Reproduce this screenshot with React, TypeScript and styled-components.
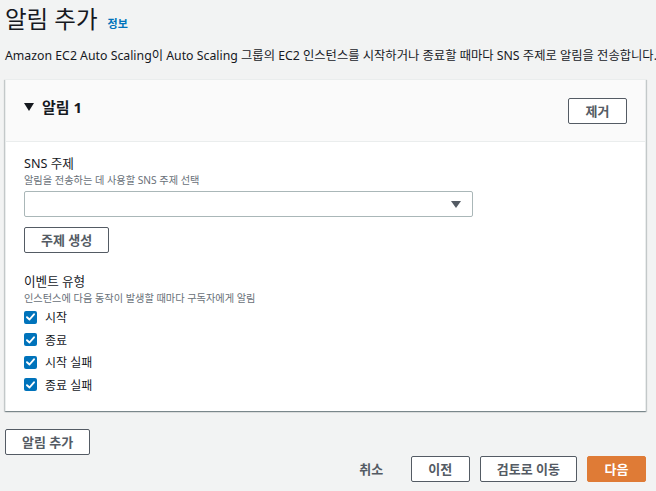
import React from "react";
import styled, { createGlobalStyle } from "styled-components";

const Global = createGlobalStyle`
  html, body { margin: 0; padding: 0; background: #f2f3f3; }
  body {
    font-family: "Noto Sans", "Noto Sans CJK KR", sans-serif;
    color: #16191f;
    -webkit-font-smoothing: antialiased;
  }
  * { box-sizing: border-box; }
`;

const Page = styled.div`
  width: 656px;
  height: 491px;
  padding: 1px 10px 0 5px;
  display: flex;
  flex-direction: column;
  overflow: hidden;
`;

const TitleRow = styled.div`
  display: flex;
  align-items: baseline;
  gap: 10px;
  height: 36px;
`;

const Title = styled.h1`
  margin: 0;
  font-size: 23.5px;
  font-weight: 400;
  line-height: 36px;
  color: #16191f;
`;

const InfoLink = styled.a`
  font-size: 11px;
  font-weight: 700;
  color: #0073bb;
  text-decoration: none;
`;

const Description = styled.p`
  margin: 8px 0 0;
  font-size: 12.3px;
  line-height: 22px;
  color: #16191f;
  white-space: nowrap;
`;

const Card = styled.section`
  margin-top: 12px;
  background: #fff;
  border: 1px solid #eaeded;
  border-bottom: none;
  box-shadow: 0 1px 1px 0 rgba(0, 28, 36, 0.3), 1px 1px 1px 0 rgba(0, 28, 36, 0.15),
    -1px 1px 1px 0 rgba(0, 28, 36, 0.15);
`;

const CardHeader = styled.header`
  height: 62px;
  background: #fafafa;
  border-bottom: 1px solid #eaeded;
  display: flex;
  justify-content: space-between;
  align-items: flex-start;
  padding: 0 18px 0 18px;
`;

const CardTitle = styled.h2`
  margin: 16px 0 0;
  display: flex;
  align-items: center;
  gap: 8px;
  font-size: 15px;
  font-weight: 700;
  line-height: 22px;
`;

const CardBody = styled.div`
  padding: 13px 18px 15px 18px;
  display: flex;
  flex-direction: column;
`;

const Field = styled.div<{ $gap?: number }>`
  display: flex;
  flex-direction: column;
  align-items: flex-start;
  margin-top: ${(p) => p.$gap ?? 0}px;
`;

const Label = styled.div`
  font-size: 12.6px;
  line-height: 18px;
  color: #16191f;
`;

const Hint = styled.div`
  font-size: 10.2px;
  line-height: 14px;
  color: #687078;
`;

const Select = styled.div`
  margin-top: 4px;
  width: 449px;
  height: 26px;
  border: 1px solid #aab7b8;
  border-radius: 2px;
  background: #fff;
  display: flex;
  align-items: center;
  justify-content: flex-end;
  padding-right: 11px;
`;

const Button = styled.button<{ $primary?: boolean; $plain?: boolean; $mt?: number }>`
  height: 26px;
  padding: 0 16px;
  min-width: 59px;
  margin-top: ${(p) => p.$mt ?? 0}px;
  border-radius: 2px;
  font-family: inherit;
  font-size: 13px;
  font-weight: 700;
  line-height: 1;
  cursor: pointer;
  white-space: nowrap;
  border: 1px solid ${(p) => (p.$primary ? "#df7b36" : p.$plain ? "transparent" : "#545b64")};
  background: ${(p) => (p.$primary ? "#df7b36" : p.$plain ? "transparent" : "#fff")};
  color: ${(p) => (p.$primary ? "#fff" : "#545b64")};
`;

const CheckList = styled.div`
  margin-top: 1px;
  display: grid;
  grid-auto-rows: 22.5px;
`;

const CheckRow = styled.label`
  display: flex;
  align-items: center;
  gap: 8px;
  font-size: 12px;
  color: #16191f;
`;

const Box = styled.span`
  width: 13px;
  height: 13px;
  border-radius: 2px;
  background: #0073bb;
  display: inline-flex;
  align-items: center;
  justify-content: center;
`;

const Bottom = styled.div`
  margin-top: 18px;
  display: flex;
  flex-direction: column;
  align-items: flex-start;
`;

const Footer = styled.div`
  margin-top: 1px;
  align-self: stretch;
  display: flex;
  justify-content: flex-end;
  gap: 10px;
`;

const Check = () => (
  <Box>
    <svg width="9" height="8" viewBox="0 0 9 8">
      <path d="M1 4.2 L3.5 6.5 L8 1.3" fill="none" stroke="#fff" strokeWidth="1.9" strokeLinecap="round" strokeLinejoin="round" />
    </svg>
  </Box>
);

const events = ["시작", "종료", "시작 실패", "종료 실패"];

export default function App() {
  return (
    <>
      <Global />
      <Page>
        <TitleRow>
          <Title>알림 추가</Title>
          <InfoLink href="#">정보</InfoLink>
        </TitleRow>
        <Description>
          Amazon EC2 Auto Scaling이 Auto Scaling 그룹의 EC2 인스턴스를 시작하거나 종료할 때마다 SNS 주제로 알림을 전송합니다.
        </Description>
        <Card>
          <CardHeader>
            <CardTitle>
              <svg width="10" height="8" viewBox="0 0 10 8">
                <path d="M0 0 H10 L5 8 Z" fill="#16191f" />
              </svg>
              알림 1
            </CardTitle>
            <Button $mt={18}>제거</Button>
          </CardHeader>
          <CardBody>
            <Field>
              <Label>SNS 주제</Label>
              <Hint>알림을 전송하는 데 사용할 SNS 주제 선택</Hint>
              <Select>
                <svg width="10" height="7" viewBox="0 0 10 7">
                  <path d="M0 0 H10 L5 7 Z" fill="#545b64" />
                </svg>
              </Select>
              <Button $mt={10}>주제 생성</Button>
            </Field>
            <Field $gap={20}>
              <Label>이벤트 유형</Label>
              <Hint>인스턴스에 다음 동작이 발생할 때마다 구독자에게 알림</Hint>
              <CheckList>
                {events.map((e) => (
                  <CheckRow key={e}>
                    <Check />
                    {e}
                  </CheckRow>
                ))}
              </CheckList>
            </Field>
          </CardBody>
        </Card>
        <Bottom>
          <Button>알림 추가</Button>
          <Footer>
            <Button $plain>취소</Button>
            <Button>이전</Button>
            <Button>검토로 이동</Button>
            <Button $primary>다음</Button>
          </Footer>
        </Bottom>
      </Page>
    </>
  );
}
